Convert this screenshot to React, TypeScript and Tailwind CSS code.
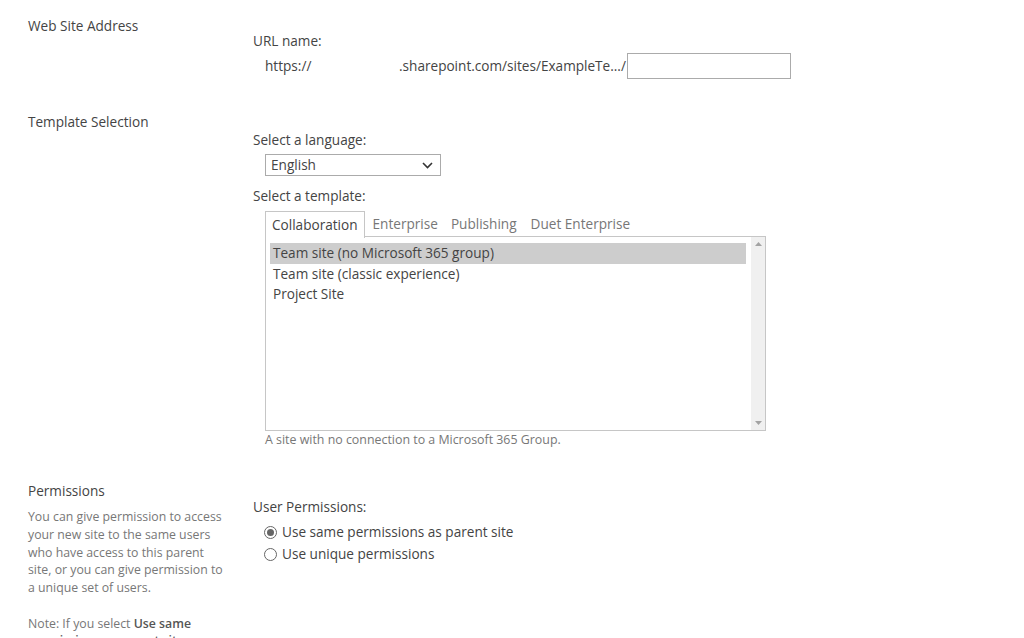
export default function App() {
  const font = { fontFamily: '"Open Sans", "Noto Sans", sans-serif' };
  return (
    <div className="h-[638px] w-[1024px] overflow-hidden bg-white text-[13.6px] leading-[18px] text-[#444]" style={font}>
      {/* Web Site Address */}
      <section className="flex h-[113px]">
        <div className="w-[253px] shrink-0 pl-[28px] pt-[17px]">Web Site Address</div>
        <div className="pt-[32px]">
          <div>URL name:</div>
          <div className="mt-[3px] flex h-[26px] items-center">
            <span className="w-[146px] pl-[12px]">https://</span>
            <span className="w-[228px] whitespace-nowrap">.sharepoint.com/sites/ExampleTe.../</span>
            <input className="h-[26px] w-[164px] border border-[#ababab] bg-white px-1 outline-none" />
          </div>
        </div>
      </section>

      {/* Template Selection */}
      <section className="flex h-[369px]">
        <div className="w-[253px] shrink-0 pl-[28px]">Template Selection</div>
        <div className="pt-[18px]">
          <div>Select a language:</div>
          <div className="ml-[12px] mt-[5px] flex h-[22px] w-[176px] items-center justify-between border border-[#ababab] pl-[5px] pr-[7px]">
            <span>English</span>
            <svg width="11" height="7" viewBox="0 0 11 7" fill="none">
              <path d="M1 1l4.5 4.5L10 1" stroke="#333" strokeWidth="1.6" />
            </svg>
          </div>
          <div className="mt-[11px]">Select a template:</div>
          <div className="ml-[12px] mt-[5px] w-[501px]">
            <div className="relative z-10 flex h-[27px] items-center pt-[1px]">
              <div className="flex h-[27px] items-center border border-b-0 border-[#c6c6c6] bg-white px-[6px]">Collaboration</div>
              <div className="pl-[8px] pr-[6px] text-[#777]">Enterprise</div>
              <div className="px-[7px] text-[#777]">Publishing</div>
              <div className="px-[7px] text-[#777]">Duet Enterprise</div>
            </div>
            <div className="-mt-px flex h-[195px] border border-[#c6c6c6]">
              <div className="flex-1 pl-[4px] pt-[6px] leading-[20.5px]">
                <div className="bg-[#cdcdcd] pl-[3px]">Team site (no Microsoft 365 group)</div>
                <div className="pl-[3px]">Team site (classic experience)</div>
                <div className="pl-[3px]">Project Site</div>
              </div>
              <div className="ml-[5px] flex w-[14px] flex-col items-center justify-between bg-[#f0f0f0] py-[5px]">
                <svg width="7" height="4" viewBox="0 0 7 4">
                  <path d="M0 4L3.5 0L7 4z" fill="#a3a3a3" />
                </svg>
                <svg width="7" height="4" viewBox="0 0 7 4">
                  <path d="M0 0L3.5 4L7 0z" fill="#a3a3a3" />
                </svg>
              </div>
            </div>
            <div className="mt-[1px] text-[12.4px] leading-[16px] text-[#777]">
              A site with no connection to a Microsoft 365 Group.
            </div>
          </div>
        </div>
      </section>

      {/* Permissions */}
      <section className="flex">
        <div className="w-[253px] shrink-0 pl-[28px]">
          <div>Permissions</div>
          <div className="mt-[8px] w-[196px] text-[12.3px] leading-[17.75px] text-[#777]">
            <p>
              You can give permission to access your new site to the same users who have access to this parent site, or you
              can give permission to a unique set of users.
            </p>
            <p className="mt-[17.75px]">
              Note: If you select <b className="font-semibold text-[#555]">Use same permissions as parent site</b>, one set
              of user permissions is shared by both sites.
            </p>
          </div>
        </div>
        <div className="pt-[16px]">
          <div>User Permissions:</div>
          <div className="ml-[11px] mt-[5px] flex h-[22px] items-center gap-[5px]">
            <span className="flex h-[13px] w-[13px] items-center justify-center rounded-full border border-[#666]">
              <span className="h-[7px] w-[7px] rounded-full bg-[#666]" />
            </span>
            <span>Use same permissions as parent site</span>
          </div>
          <div className="ml-[11px] flex h-[22px] items-center gap-[5px]">
            <span className="h-[13px] w-[13px] rounded-full border border-[#666]" />
            <span>Use unique permissions</span>
          </div>
        </div>
      </section>
    </div>
  );
}
